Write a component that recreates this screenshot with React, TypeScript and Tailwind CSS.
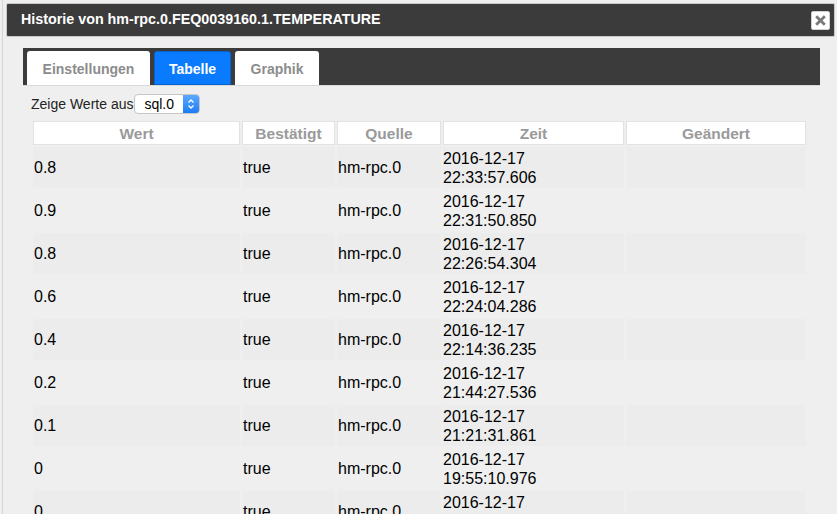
import React from "react";

const rows = [
  ["0.8", "true", "hm-rpc.0", "2016-12-17", "22:33:57.606"],
  ["0.9", "true", "hm-rpc.0", "2016-12-17", "22:31:50.850"],
  ["0.8", "true", "hm-rpc.0", "2016-12-17", "22:26:54.304"],
  ["0.6", "true", "hm-rpc.0", "2016-12-17", "22:24:04.286"],
  ["0.4", "true", "hm-rpc.0", "2016-12-17", "22:14:36.235"],
  ["0.2", "true", "hm-rpc.0", "2016-12-17", "21:44:27.536"],
  ["0.1", "true", "hm-rpc.0", "2016-12-17", "21:21:31.861"],
  ["0", "true", "hm-rpc.0", "2016-12-17", "19:55:10.976"],
  ["0", "true", "hm-rpc.0", "2016-12-17", "19:40:02.113"],
];

const headers = [
  { title: "Wert", w: "w-[207px]" },
  { title: "Bestätigt", w: "w-[93px]" },
  { title: "Quelle", w: "w-[104px]" },
  { title: "Zeit", w: "w-[181px]" },
  { title: "Geändert", w: "w-[180px]" },
];

const App = () => {
  return (
    <div className="w-[837px] h-[514px] overflow-hidden bg-[#efefef] font-['Liberation_Sans',Arial,sans-serif] pl-[2px]">
      <div className="h-full border-l border-[#d4d4d4] pl-[3px] pt-[3px] pr-[2px]">
        {/* Title bar */}
        <div className="flex flex-row items-center justify-between h-[34px] bg-[#3b3b3b] border border-[#c8c8c8] rounded-[2px] pl-[14px] pr-[4px]">
          <p className="text-white font-bold text-[14.3px]">
            Historie von hm-rpc.0.FEQ0039160.1.TEMPERATURE
          </p>
          <button className="flex items-center justify-center w-[19px] h-[19px] bg-white rounded-[2px] border border-[#d0d0d0]">
            <svg width="11" height="11" viewBox="0 0 10 10">
              <path d="M2 2 L8 8 M8 2 L2 8" stroke="#7a7a7a" strokeWidth="2.6" strokeLinecap="square" />
            </svg>
          </button>
        </div>

        <div className="pl-[17px] pr-[15px] pt-[11px]">
          {/* Tabs */}
          <div className="flex flex-row items-end gap-[4px] h-[38px] bg-[#3b3b3b] pl-[4px] border-b border-[#d9d9d9]">
            <div className="flex items-center justify-center w-[123px] h-[34px] pt-[3px] bg-white rounded-t-[3px] text-[#8c8c8c] font-bold text-[14px]">
              Einstellungen
            </div>
            <div className="flex items-center justify-center w-[77px] h-[34px] pt-[3px] bg-[#0a7aff] border border-[#0563d0] rounded-t-[3px] text-white font-bold text-[14px]">
              Tabelle
            </div>
            <div className="flex items-center justify-center w-[84px] h-[34px] pt-[3px] bg-white rounded-t-[3px] text-[#8c8c8c] font-bold text-[14px]">
              Graphik
            </div>
          </div>

          {/* Source select */}
          <div className="flex flex-row items-center h-[20px] mt-[8px] pl-[8px]">
            <span className="text-[14px] text-[#222]">Zeige Werte aus</span>
            <div className="flex flex-row items-stretch h-[20px] w-[66px] ml-[1px] bg-white border border-[#c6c6c6] rounded-[4px] overflow-hidden">
              <span className="flex-1 pl-[9px] text-[14px] leading-[18px] text-black">sql.0</span>
              <span className="flex items-center justify-center w-[16px] bg-gradient-to-b from-[#5aa8ff] to-[#1a7cf5]">
                <svg width="8" height="12" viewBox="0 0 8 12">
                  <path d="M1.5 4.5 L4 2 L6.5 4.5 M1.5 7.5 L4 10 L6.5 7.5" stroke="white" strokeWidth="1.3" fill="none" />
                </svg>
              </span>
            </div>
          </div>

          {/* Table */}
          <table className="mt-[5px] ml-[8px] border-separate border-spacing-[2px] -mx-[2px] table-fixed text-[16px]">
            <thead>
              <tr>
                {headers.map((h) => (
                  <th
                    key={h.title}
                    className={`${h.w} h-[24px] bg-white border border-[#e2e2e2] text-[#9a9a9a] font-bold text-[15.5px] leading-[19px] text-center p-0`}
                  >
                    {h.title}
                  </th>
                ))}
              </tr>
            </thead>
            <tbody>
              {rows.map((r, i) => (
                <tr key={i} className={i % 2 === 0 ? "bg-[#ececec]" : "bg-[#efefef]"}>
                  <td className="h-[41px] px-[1px] text-black align-middle">{r[0]}</td>
                  <td className="h-[41px] px-[1px] text-black align-middle">{r[1]}</td>
                  <td className="h-[41px] px-[1px] text-black align-middle">{r[2]}</td>
                  <td className="h-[41px] px-[0px] text-black align-middle leading-[19px]">
                    <div>{r[3]}</div>
                    <div>{r[4]}</div>
                  </td>
                  <td className="h-[41px]"></td>
                </tr>
              ))}
            </tbody>
          </table>
        </div>
      </div>
    </div>
  );
};

export default App;
